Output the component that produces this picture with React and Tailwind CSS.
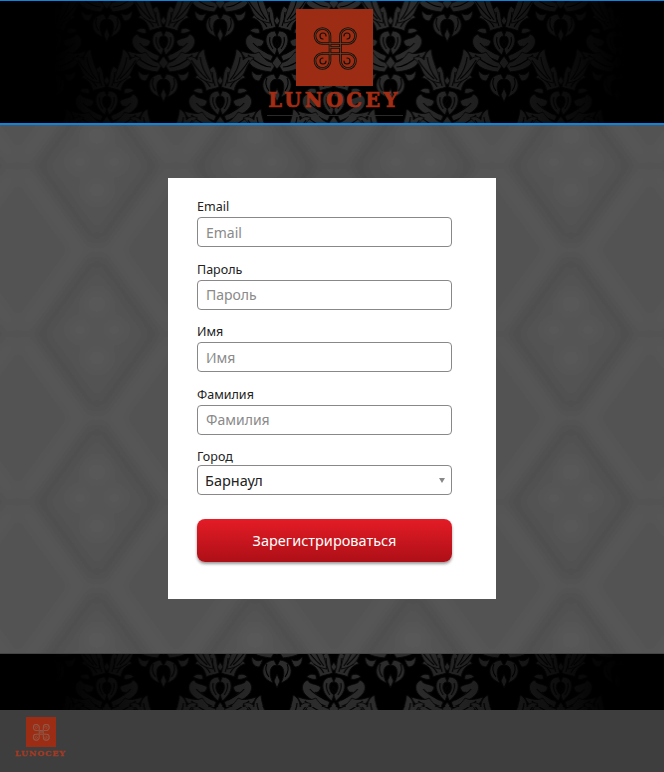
const fields = ['Email', 'Пароль', 'Имя', 'Фамилия'];

function Flower() {
  const half = (
    <>
      <path d="M1 -10C4 -18 2 -25 7 -31C10 -27 14 -28 13 -20C17 -25 23 -24 25 -19C19 -18 15 -13 14 -6C11 -8 6 -8 1 -10Z" />
      <path d="M2 -6C7 -6 11 -3 11 3C11 9 7 14 2 18L0 12C3 10 5 6 4 2C4 0 2 -1 0 -1Z" />
      <path d="M13 4C19 0 24 2 26 -3C32 -1 33 6 29 11C24 17 15 20 6 24L4 19C10 16 16 13 19 9C17 10 14 9 13 4Z" />
      <path d="M18 -8C22 -10 26 -8 27 -6C23 -4 20 -3 17 -4Z" />
      <path d="M5 -11C7 -16 8 -20 8 -25M10 -10C12 -14 15 -17 20 -19M7 0C8 4 7 8 4 12M24 6C20 11 14 14 8 17" fill="none" stroke="#000" strokeWidth="1.100" />
    </>
  );
  return (
    <g>
      {half}
      <g transform="scale(-1,1)">{half}</g>
      <path d="M0 -21L3 -16L0 -12L-3 -16Z" />
      <path d="M0 3L2 7L0 10L-2 7Z" fill="#000" />
    </g>
  );
}

function Ornament() {
  const half = (
    <>
      <path d="M1 -14C8 -12 13 -17 18 -24C23 -21 29 -23 36 -25C34 -19 29 -16 26 -11C21 -6 13 -5 6 -4C4 -7 2 -10 1 -14Z" />
      <path d="M3 -2C10 -1 15 3 14 11C13 16 9 19 4 21C7 15 8 9 5 5C3 3 1 3 0 4Z" />
      <path d="M14 -3C18 0 22 -1 25 -5C26 0 23 5 18 5C16 3 15 0 14 -3Z" />
      <path d="M6 -9C13 -9 20 -13 29 -21M10 2C12 6 11 11 8 15" fill="none" stroke="#000" strokeWidth="1.100" />
    </>
  );
  return (
    <g>
      {half}
      <g transform="scale(-1,1)">{half}</g>
      <path d="M0 -20L5 -13L0 -7L-5 -13Z" />
      <path d="M0 12L3 19L0 26L-3 19Z" />
    </g>
  );
}

function Leaf() {
  const half = (
    <>
      <path d="M7 31C8 20 15 10 16 -3C20 -1 23 3 23 8C27 4 30 4 34 6C29 9 27 14 25 19C22 26 15 30 7 31Z" />
      <path d="M10 28C15 22 19 14 20 5M13 27C19 22 24 16 29 8" fill="none" stroke="#000" strokeWidth="1.100" />
    </>
  );
  return (
    <g>
      {half}
      <g transform="scale(-1,1)">{half}</g>
    </g>
  );
}

function Damask({ id, dy }) {
  return (
    <svg className="absolute inset-0 w-full h-full" aria-hidden="true">
      <defs>
        <pattern id={id} width="113.5" height="120" patternUnits="userSpaceOnUse" patternTransform={`translate(50 ${dy})`}>
          <rect width="113.5" height="120" fill="#000" />
          <g fill="#2c2c2c" stroke="#050505" strokeWidth="0.9">
            <g transform="translate(0 37)"><Flower /></g>
            <g transform="translate(113.5 37)"><Flower /></g>
            <g transform="translate(0 76)"><Ornament /></g>
            <g transform="translate(113.5 76)"><Ornament /></g>
            <g transform="translate(56.75 97)"><Flower /></g>
            <g transform="translate(56.75 -23)"><Flower /></g>
            <g transform="translate(56.75 16)"><Ornament /></g>
            <g transform="translate(56.75 136)"><Ornament /></g>
            <g transform="translate(56.75 52)"><Leaf /></g>
            <g transform="translate(0 112)"><Leaf /></g>
            <g transform="translate(113.5 112)"><Leaf /></g>
            <g transform="translate(0 -8)"><Leaf /></g>
            <g transform="translate(113.5 -8)"><Leaf /></g>
          </g>
        </pattern>
      </defs>
      <rect width="100%" height="100%" fill={`url(#${id})`} />
    </svg>
  );
}

function BlurredDamask() {
  return (
    <svg className="absolute inset-0 w-full h-full" aria-hidden="true">
      <defs>
        <filter id="soft" x="-5%" y="-5%" width="110%" height="110%">
          <feGaussianBlur stdDeviation="6" />
        </filter>
        <pattern id="bigDamask" width="158" height="168" patternUnits="userSpaceOnUse" patternTransform="translate(18 -43)">
          <rect width="158" height="168" fill="#535353" />
          <g stroke="#4e4e4e" strokeWidth="8" fill="none">
            <path d="M79 6L22 84L79 162L136 84Z" />
          </g>
          <g stroke="#595959" strokeWidth="10" fill="none">
            <path d="M72 -14L6 76M86 -14L152 76" />
            <path d="M72 182L6 92M86 182L152 92" />
          </g>
          <g fill="#585858">
            <circle cx="79" cy="54" r="14" />
            <circle cx="62" cy="80" r="11" />
            <circle cx="96" cy="80" r="11" />
            <circle cx="79" cy="108" r="13" />
            <circle cx="79" cy="0" r="6" />
            <circle cx="79" cy="168" r="6" />
          </g>
        </pattern>
      </defs>
      <rect x="-20" y="-20" width="704" height="568" fill="url(#bigDamask)" filter="url(#soft)" />
    </svg>
  );
}

function Knot({ className, line, core }) {
  const d =
    'M34 52V27a7.5 7.5 0 1 0-7.5 7.5H52a7.5 7.5 0 1 0-7.5-7.5V52a7.5 7.5 0 1 0 7.5-7.5H26.500a7.500 7.500 0 1 0 7.500 7.500M34 38.500h10.500';
  const spirals = 'M27 30a3 3 0 1 1 3-3M51 30a3 3 0 1 0-3-3M27 49a3 3 0 1 0 3 3M51 49a3 3 0 1 1-3 3';
  return (
    <svg viewBox="0 0 77 77" className={className} aria-hidden="true">
      <rect width="77" height="77" fill="#9c2c13" />
      <g fill="none" strokeLinecap="round">
        <path d={d} stroke={line} strokeWidth="2.600" />
        <path d={d} stroke={core} strokeWidth="0.800" />
        <path d={spirals} stroke={line} strokeWidth="1.200" />
      </g>
    </svg>
  );
}

function Field({ label }) {
  return (
    <div className="mb-[12.6px]">
      <label className="block text-[12.500px] leading-[20px] text-[#222]">{label}</label>
      <input
        placeholder={label}
        className="block w-full h-[30px] px-[8px] bg-white border border-[#888] rounded-[4px] text-[14px] placeholder:text-[#8a8a8a] outline-none"
      />
    </div>
  );
}

export default function App() {
  return (
    <div className="w-[664px] h-[772px] overflow-hidden bg-[#3e3e3e] font-['Noto_Sans',sans-serif]">
      <header className="relative h-[125px] bg-black border-t border-b-2 border-[#0b84e4]">
        <Damask id="topDamask" dy={-1} />
        <div className="absolute inset-0 bg-[linear-gradient(90deg,#000_8%,transparent_42%,transparent_62%,#000_94%)]" />
        <div className="relative flex flex-col items-center pt-2 pl-[5px]">
          <Knot className="w-[77px] h-[77px]" line="#161008" core="#7a3a2a" />
          <div className="mt-[3px] font-['DejaVu_Serif',serif] font-bold text-[19.500px] leading-[24px] tracking-[3.400px] text-[#a32d14] [-webkit-text-stroke:0.7px_#a32d14]">
            LUNOCEY
          </div>
          <div className="mt-[2px] w-[136px] h-px bg-[#2a2a2a]" />
        </div>
      </header>

      <main className="relative h-[528px] flex justify-center py-[53px] bg-[#535353]">
        <BlurredDamask />
        <form className="relative w-[328px] h-[421px] bg-white pt-[19px] pl-[29px] pr-[44px]">
          {fields.map((f) => (
            <Field key={f} label={f} />
          ))}
          <label className="block text-[12.500px] leading-[20px] -mb-[2px] text-[#222]">Город</label>
          <div className="relative">
            <select className="block w-full h-[30px] pl-[7px] appearance-none bg-white border border-[#888] rounded-[4px] text-[14.500px] text-[#222] outline-none">
              <option>Барнаул</option>
            </select>
            <span className="absolute right-[7px] top-[13px] w-0 h-0 border-x-[3px] border-x-transparent border-t-[5px] border-t-[#888]" />
          </div>
          <button
            type="button"
            className="block w-full h-[43px] mt-[24px] rounded-[8px] bg-[linear-gradient(180deg,#e41c26,#ad0f17)] text-white text-[14.500px] shadow-[0_2px_3px_rgba(0,0,0,0.4)]"
          >
            Зарегистрироваться
          </button>
        </form>
      </main>

      <div className="relative h-[57px] bg-black border-t border-[#444]">
        <Damask id="bottomDamask" dy={652} />
        <div className="absolute inset-0 bg-[linear-gradient(90deg,#000_8%,transparent_42%,transparent_62%,#000_94%)]" />
      </div>

      <footer className="h-[62px] pl-[14px] pt-[7px] bg-[#3e3e3e]">
        <div className="w-[53px] flex flex-col items-center">
          <Knot className="w-[32px] h-[30px]" line="#8a6a5c" core="#9c2c13" />
          <div className="mt-[2px] font-['DejaVu_Serif',serif] font-bold text-[8px] leading-[9px] tracking-[0.9px] text-[#a33a22] [-webkit-text-stroke:0.3px_#a33a22]">
            LUNOCEY
          </div>
        </div>
      </footer>
    </div>
  );
}
